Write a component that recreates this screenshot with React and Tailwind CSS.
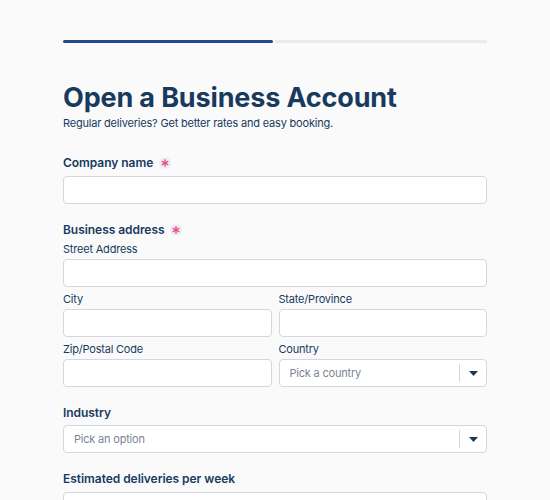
import React from 'react';

const navy = 'text-[#173a5e]';

const Required = () => (
  <svg className="ml-[6px]" width="12" height="12" viewBox="0 0 12 12">
    <circle cx="6" cy="6" r="6" fill="#eceef2" />
    <g stroke="#e4508a" strokeWidth="1.4" strokeLinecap="round">
      <path d="M6 2.8v6.4" />
      <path d="M3.2 4.4l5.6 3.2" />
      <path d="M3.2 7.6l5.6-3.2" />
    </g>
  </svg>
);

const FieldLabel = ({ children, required = false }) => (
  <div className={`flex h-[18px] items-center text-[12px] font-semibold tracking-[-0.05px] ${navy}`}>
    {children}
    {required && <Required />}
  </div>
);

const SubLabel = ({ children }) => (
  <div className={`h-4 text-[11px] leading-4 tracking-[-0.2px] ${navy}`}>{children}</div>
);

const TextInput = () => (
  <div className="h-7 w-full rounded-[4px] border border-[#d3d8df] bg-white" />
);

const SelectInput = ({ placeholder }) => (
  <div className="flex h-7 w-full items-center rounded-[4px] border border-[#d3d8df] bg-white">
    <span className="flex-1 pl-[10px] text-[11px] tracking-[-0.2px] text-[#7b8594]">{placeholder}</span>
    <span className="h-[18px] w-px bg-[#d3d8df]" />
    <span className="flex w-[26px] justify-center">
      <svg width="9" height="5" viewBox="0 0 9 5">
        <path d="M0 0h9L4.5 5z" fill="#173a5e" />
      </svg>
    </span>
  </div>
);

export default function App() {
  return (
    <div
      className="min-h-[500px] bg-[#fafafb] px-[63px] pt-10"
      style={{ fontFamily: 'Inter, "Noto Sans", sans-serif' }}
    >
      <div className="flex gap-[2px]">
        <div className="h-[3px] w-[210px] rounded-full bg-[#1d4e8c]" />
        <div className="h-[3px] flex-1 rounded-full bg-[#e8ebef]" />
      </div>

      <h1 className={`mt-[38px] h-[34px] text-[27px] font-bold leading-[34px] tracking-[-0.15px] ${navy}`}>
        Open a Business Account
      </h1>
      <p className={`h-4 text-[11px] leading-4 tracking-[-0.2px] ${navy}`}>
        Regular deliveries? Get better rates and easy booking.
      </p>

      <section className="mt-[23px]">
        <FieldLabel required>Company name</FieldLabel>
        <div className="mt-1">
          <TextInput />
        </div>
      </section>

      <section className="mt-[17px]">
        <FieldLabel required>Business address</FieldLabel>
        <div className="mt-[2px]">
          <SubLabel>Street Address</SubLabel>
          <div className="mt-[2px]">
            <TextInput />
          </div>
        </div>
        <div className="mt-1 grid grid-cols-2 gap-x-[7px] gap-y-1">
          <div>
            <SubLabel>City</SubLabel>
            <div className="mt-[2px]">
              <TextInput />
            </div>
          </div>
          <div>
            <SubLabel>State/Province</SubLabel>
            <div className="mt-[2px]">
              <TextInput />
            </div>
          </div>
          <div>
            <SubLabel>Zip/Postal Code</SubLabel>
            <div className="mt-[2px]">
              <TextInput />
            </div>
          </div>
          <div>
            <SubLabel>Country</SubLabel>
            <div className="mt-[2px]">
              <SelectInput placeholder="Pick a country" />
            </div>
          </div>
        </div>
      </section>

      <section className="mt-[17px]">
        <FieldLabel>Industry</FieldLabel>
        <div className="mt-[3px]">
          <SelectInput placeholder="Pick an option" />
        </div>
      </section>

      <section className="mt-[17px]">
        <FieldLabel>Estimated deliveries per week</FieldLabel>
        <div className="mt-1">
          <TextInput />
        </div>
      </section>
    </div>
  );
}
